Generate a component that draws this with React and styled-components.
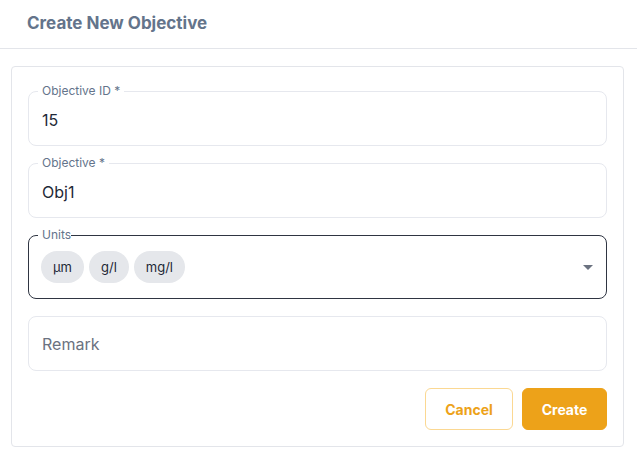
import React from 'react'
import styled, { createGlobalStyle } from 'styled-components'

const Global = createGlobalStyle`
    body {
        margin: 0;
        background: #fff;
        font-family: Inter, "Noto Sans", sans-serif;
    }
`

const units = ['µm', 'g/l', 'mg/l']

const App = () => (
    <Page>
        <Global />
        <Header>
            <h1>Create New Objective</h1>
        </Header>
        <Card>
            <Field>
                <Label>Objective ID *</Label>
                <Value>15</Value>
            </Field>
            <Field>
                <Label>Objective *</Label>
                <Value>Obj1</Value>
            </Field>
            <Field focused tall>
                <Label tight>Units</Label>
                <Chips>
                    {units.map(u => <Chip key={u}>{u}</Chip>)}
                </Chips>
                <Arrow viewBox="0 0 10 5"><path d="M0 0h10L5 5z" /></Arrow>
            </Field>
            <Field>
                <Value placeholder>Remark</Value>
            </Field>
            <Actions>
                <Button>Cancel</Button>
                <Button primary>Create</Button>
            </Actions>
        </Card>
    </Page>
)

export default App


const Page = styled.div`
    width: 637px;
    height: 456px;
    overflow: hidden;
`

const Header = styled.div`
    height: 48px;
    border-bottom: 1px solid #e3e5ea;
    display: flex;
    align-items: center;
    padding-left: 27px;
    h1 {
        margin: 0 0 3px;
        font-size: 17px;
        font-weight: 700;
        color: #64748b;
    }
`

const Card = styled.div`
    margin: 17px 13px 0 11px;
    border: 1px solid #e3e5ea;
    border-radius: 4px;
    padding: 24px 16px 16px 16px;
    display: flex;
    flex-direction: column;
    gap: 17px;
`

const Field = styled.div`
    position: relative;
    height: ${p => (p.tall ? '64px' : '55px')};
    box-sizing: border-box;
    border: 1px solid ${p => (p.focused ? '#2f3542' : '#e6e8ee')};
    border-radius: 8px;
    display: flex;
    align-items: center;
    padding: 0 13px;
`

const Label = styled.span`
    position: absolute;
    top: -8px;
    left: 9px;
    padding: ${p => (p.tight ? '0 0 0 4px' : '0 4px')};
    background: #fff;
    font-size: 12px;
    line-height: 14px;
    color: #64748b;
`

const Value = styled.span`
    font-size: 16px;
    color: ${p => (p.placeholder ? '#6b7280' : '#1f2937')};
    margin-top: ${p => (p.placeholder ? '0' : '2px')};
`

const Chips = styled.div`
    display: flex;
    gap: 5px;
    margin-left: -1px;
`

const Chip = styled.span`
    height: 32px;
    display: inline-flex;
    align-items: center;
    padding: 0 12px;
    border-radius: 16px;
    background: #e5e7eb;
    font-size: 13px;
    color: #1f2937;
`

const Arrow = styled.svg`
    position: absolute;
    right: 13px;
    top: 29px;
    width: 10px;
    height: 5px;
    fill: #6b7280;
`

const Actions = styled.div`
    display: flex;
    justify-content: flex-end;
    gap: 9px;
`

const Button = styled.button`
    height: 42px;
    width: ${p => (p.primary ? '85px' : '88px')};
    padding: 0;
    border-radius: 6px;
    border: 1px solid ${p => (p.primary ? '#eda219' : '#fbd892')};
    background: ${p => (p.primary ? '#eda219' : '#fff')};
    color: ${p => (p.primary ? '#fff' : '#eda219')};
    font-family: Inter, sans-serif;
    font-size: 14px;
    font-weight: 700;
    cursor: pointer;
`
